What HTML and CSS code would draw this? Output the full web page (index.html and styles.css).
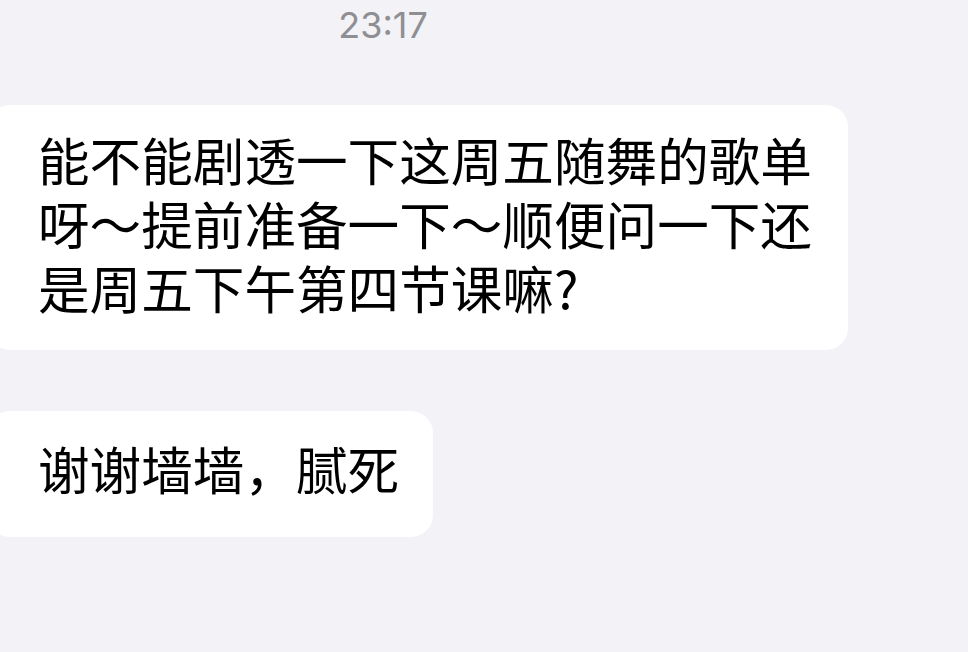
FILE: index.html
```html
<!DOCTYPE html>
<html lang="zh">
<head>
<meta charset="utf-8">
<link rel="stylesheet" href="styles.css">
</head>
<body>
<div class="chat">
  <div class="time">23:17</div>
  <div class="bubble bubble-long">能不能剧透一下这周五随舞的歌单呀～提前准备一下～顺便问一下还是周五下午第四节课嘛?</div>
  <div class="bubble bubble-short">谢谢墙墙，腻死</div>
</div>
</body>
</html>
```
FILE: styles.css
```css
html, body {
  margin: 0;
  padding: 0;
  background: #f2f2f7;
  width: 968px;
  height: 652px;
  overflow: hidden;
}
.chat {
  display: flex;
  flex-direction: column;
  align-items: flex-start;
}
.time {
  width: 766px;
  text-align: center;
  font-family: Inter, "Liberation Sans", sans-serif;
  font-size: 36px;
  line-height: 50px;
  color: #8e8e93;
  margin-bottom: 55px;
}
.bubble {
  background: #ffffff;
  border-radius: 22px;
  margin-left: -12px;
  padding: 22px 36px 31px 50px;
  font-family: "Noto Sans CJK SC", sans-serif;
  font-weight: 400;
  font-size: 51.6px;
  line-height: 64px;
  color: #000;
}
.bubble-long {
  width: 774px;
}
.bubble-short {
  margin-top: 61px;
  padding-top: 25px;
  padding-bottom: 37px;
  padding-right: 34px;
}
```
